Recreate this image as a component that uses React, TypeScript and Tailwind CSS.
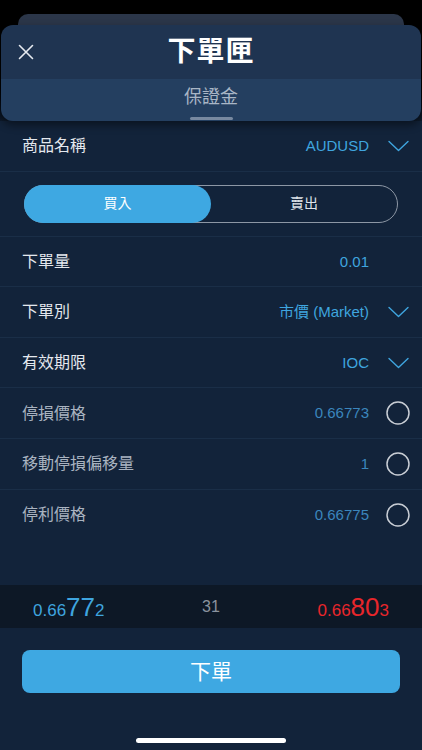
import React from "react";

const FONT = { fontFamily: '"Liberation Sans", "Noto Sans CJK TC", sans-serif' };

function Chevron() {
  return (
    <svg width="21" height="12" viewBox="0 0 21 12" className="shrink-0 mr-[1px]">
      <path d="M1 1.5 L10.5 10.5 L20 1.5" fill="none" stroke="#3fa5df" strokeWidth="1.4" strokeLinecap="round" strokeLinejoin="round" />
    </svg>
  );
}

function Circle() {
  return (
    <svg width="24" height="24" viewBox="0 0 24 24" className="shrink-0">
      <circle cx="12" cy="12" r="11" fill="none" stroke="#c9ced5" strokeWidth="1.5" />
    </svg>
  );
}

function Row({ label, value, right, dim, last }: { label: string; value: string; right?: "chev" | "circle" | "none"; dim?: boolean; last?: boolean }) {
  return (
    <div className={`flex items-center h-[50.6px] pl-[22px] pr-[12px] ${last ? "" : "border-b border-[#1a2e47]"}`}>
      <span className={`text-[16px] pt-[1px] ${dim ? "text-[#a9b3c0]" : "text-[#e4e8ee]"}`}>{label}</span>
      <span className={`ml-auto text-[15px] pt-[1px] ${dim ? "text-[#3b86bd]" : "text-[#3fa5df]"}`}>{value}</span>
      <div className="w-[41px] flex justify-end items-center">
        {right === "chev" && <Chevron />}
        {right === "circle" && <Circle />}
      </div>
    </div>
  );
}

export default function App() {
  return (
    <div style={FONT} className="w-[422px] h-[750px] bg-[#12233a] overflow-hidden flex flex-col">
      {/* Top stacked cards */}
      <div className="bg-gradient-to-b from-black from-60% to-[#0e1b2c] pt-[14px]">
        <div className="mx-[18px] h-[22px] rounded-t-[10px] bg-[#2b3649]" />
        <div className="-mt-[11px] mx-[1px] rounded-[12px] overflow-hidden shadow-[0_4px_8px_rgba(0,0,0,0.45)] relative">
          <div className="h-[54px] bg-[#1f3451] flex items-center justify-center relative">
            <svg width="16" height="16" viewBox="0 0 16 16" className="absolute left-[17px] top-[19px]">
              <path d="M1.5 1.5 L14.5 14.5 M14.5 1.5 L1.5 14.5" stroke="#e6eaf0" strokeWidth="1.6" strokeLinecap="round" />
            </svg>
            <span className="text-[28px] font-bold text-white tracking-[1px] leading-none">下單匣</span>
          </div>
          <div className="h-[42px] bg-[#243f60] flex flex-col items-center pt-[6px]">
            <span className="text-[18px] text-[#a9b6c6] leading-[24px]">保證金</span>
            <div className="mt-[8px] w-[43px] h-[3px] rounded-full bg-[#7889a0]" />
          </div>
        </div>
      </div>

      {/* Main list */}
      <div className="flex flex-col">
        <Row label="商品名稱" value="AUDUSD" right="chev" />
        <div className="h-[65px] flex items-center px-[24px] border-b border-[#1a2e47]">
          <div className="flex-1 h-[38px] rounded-full border border-[#8d97a5] flex">
            <div className="w-[187px] -ml-px -my-px h-[38px] rounded-full bg-[#3ea8e2] flex items-center justify-center text-white text-[14px]">買入</div>
            <div className="flex-1 flex items-center justify-center text-[#dfe4ea] text-[14px]">賣出</div>
          </div>
        </div>
        <Row label="下單量" value="0.01" right="none" />
        <Row label="下單別" value="市價 (Market)" right="chev" />
        <Row label="有效期限" value="IOC" right="chev" />
        <Row label="停損價格" value="0.66773" right="circle" dim />
        <Row label="移動停損偏移量" value="1" right="circle" dim />
        <Row label="停利價格" value="0.66775" right="circle" dim last />
      </div>

      {/* Price bar */}
      <div className="mt-[45px] h-[43px] bg-[#0d1826] flex items-center px-[33px]">
        <div className="flex items-baseline text-[#3fa5df] leading-none">
          <span className="text-[17px]">0.66</span>
          <span className="text-[26px]">77</span>
          <span className="text-[17px]">2</span>
        </div>
        <span className="flex-1 text-center text-[16px] text-[#8a939e]">31</span>
        <div className="flex items-baseline text-[#e8262b] leading-none">
          <span className="text-[17px]">0.66</span>
          <span className="text-[26px]">80</span>
          <span className="text-[17px]">3</span>
        </div>
      </div>

      {/* Submit button */}
      <div className="px-[22px] pt-[22px]">
        <div className="h-[43px] rounded-[8px] bg-[#3ea8e2] flex items-center justify-center text-white text-[21px]">下單</div>
      </div>

      <div className="mt-auto mb-[7px] flex justify-center">
        <div className="w-[150px] h-[5px] rounded-full bg-white" />
      </div>
    </div>
  );
}
